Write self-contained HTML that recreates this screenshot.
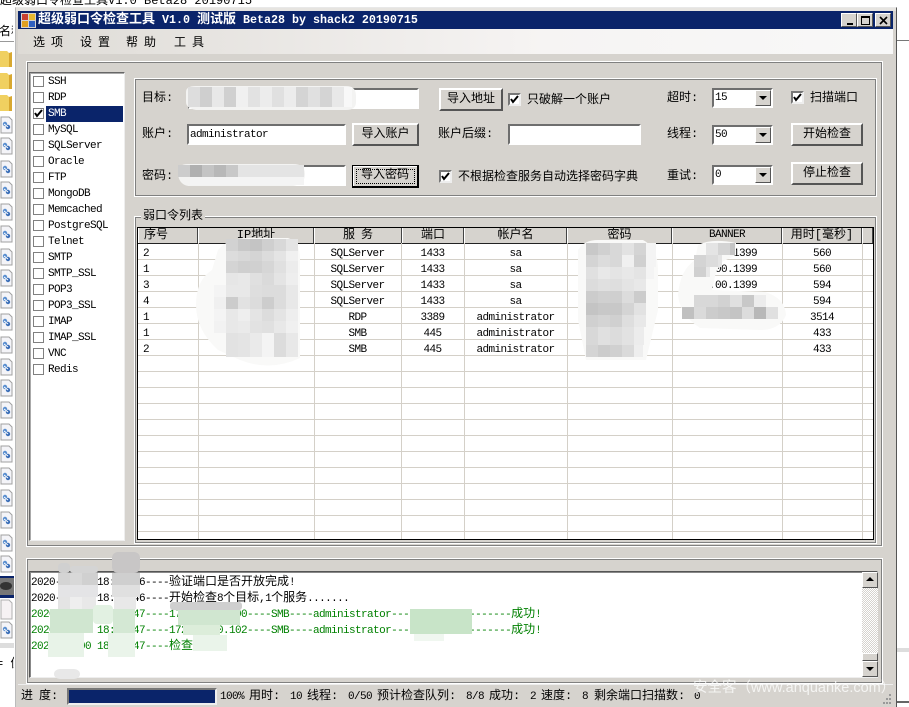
<!DOCTYPE html>
<html><head><meta charset="utf-8"><style>
html,body{margin:0;padding:0;background:#fff}
#p{position:relative;width:909px;height:707px;overflow:hidden;background:#fff;font:12px/16px "Liberation Mono","WenQuanYi Zen Hei","Noto Sans CJK SC",monospace;color:#000}
#p div,#p span{position:absolute;box-sizing:border-box}
#p span.z{position:static;font-size:12px;letter-spacing:0}
.t{white-space:pre;height:16px}
.c{text-align:center}
.m{font-size:11px;letter-spacing:-.6px}
.t.m{margin-top:2px}
.lg{font-size:11px;letter-spacing:-.6px}
.mn{word-spacing:-1.2px}
.g{border:1px solid #fff;outline:1px solid #808080;outline-offset:-2px}
.in{background:#fff;border:2px solid;border-color:#6e6e6e #fff #fff #6e6e6e}
.b{background:#d6d3ce;border:2px solid;border-color:#fff #555 #555 #fff;text-align:center;line-height:18px}
.cb{width:13px;height:13px;background:#fff;border:2px solid;border-color:#777 #eee #eee #777}
.cb svg{position:absolute;left:0;top:0}
.l{width:11px;height:11px;left:33px;border:1px solid #808080;background:#fff}
.arr{width:0;height:0;border-left:4px solid transparent;border-right:4px solid transparent}
.hl{height:1px;left:138px;width:735px;background:#d4d0c8}
.vl{width:1px;top:243px;height:296px;background:#d4d0c8}
.hd{top:228px;height:15px;background:#d6d3ce;border-right:1px solid #444;border-left:1px solid #fff;text-align:center;line-height:15px}
.gr{color:#008000}
</style></head><body><div id="p">
<div class="t" style="left:0;top:-7px;font-size:12px">超级弱口令检查工具V1.0 Beta28 20190715</div>

<svg style="position:absolute;left:0;top:0" width="15" height="707">
<defs>
<g id="f"><path d="M1 1h8l3 3v13H1z" fill="#f4f4f8" stroke="#a0a0a0"/><circle cx="5" cy="8" r="2.2" fill="#5b8fd0"/><circle cx="8" cy="11" r="2.2" fill="#3c6fb8"/><path d="M4 8l4 3" stroke="#fff"/></g>
<g id="o"><path d="M0 2h7l2 2h3v14H0z" fill="#f0d060"/><path d="M9 4l3-1v15H9z" fill="#d8a830"/></g>
</defs>
<rect x="0" y="22" width="14" height="19" fill="#fff"/>
<rect x="0" y="41" width="14" height="1" fill="#999"/>
<use href="#o" y="49"/><use href="#o" y="71"/><use href="#o" y="93"/>
<use href="#f" y="116"/><use href="#f" y="137"/><use href="#f" y="160"/><use href="#f" y="181"/><use href="#f" y="203"/><use href="#f" y="225"/><use href="#f" y="248"/><use href="#f" y="269"/><use href="#f" y="291"/><use href="#f" y="313"/><use href="#f" y="336"/><use href="#f" y="358"/><use href="#f" y="379"/><use href="#f" y="401"/><use href="#f" y="423"/><use href="#f" y="445"/><use href="#f" y="467"/><use href="#f" y="489"/><use href="#f" y="511"/><use href="#f" y="534"/><use href="#f" y="555"/>
<rect x="0" y="576" width="14" height="22" fill="#0a246a"/><rect x="0" y="578" width="14" height="17" fill="#777"/><ellipse cx="6" cy="586" rx="6" ry="4" fill="#333"/>
<path d="M1 600h8l3 3v16H1z" fill="#f6f2f4" stroke="#b0b0b0"/>
<use href="#f" y="621"/>
<rect x="0" y="643" width="14" height="5" fill="#ddd"/>
</svg>
<div class="t" style="left:-1px;top:24px;width:14px;overflow:hidden">名称</div>
<div class="t" style="left:-4px;top:656px;width:18px;overflow:hidden">= 值</div>

<div style="left:897px;top:40px;width:12px;height:1px;background:#777"></div>
<div style="left:897px;top:648px;width:12px;height:4px;background:#ddd"></div>
<div style="left:897px;top:701px;width:12px;height:2px;background:#666"></div>

<!-- window -->
<div style="left:15px;top:7px;width:882px;height:701px;background:#d6d3ce;border-top:1px solid #e8e8e8;border-left:1px solid #bbb;border-right:1px solid #555"></div>
<div style="left:16px;top:8px;width:880px;height:3px;background:#e6e4e0"></div>
<div style="left:18px;top:11px;width:875px;height:18px;background:#0a246a"></div>
<svg style="position:absolute;left:21px;top:13px" width="15" height="15"><rect width="15" height="15" fill="#d6d3ce"/><rect x="1" y="1" width="6" height="6" fill="#c84030"/><rect x="8" y="1" width="6" height="6" fill="#e8b830"/><rect x="1" y="8" width="6" height="6" fill="#e0a020"/><rect x="8" y="8" width="6" height="6" fill="#3060c0"/></svg>
<div class="t" style="left:38px;top:12px;color:#fff;font-size:13px;font-weight:bold;font-family:'Liberation Mono','Noto Sans CJK SC',monospace;letter-spacing:0">超级弱口令检查工具<span style="position:static;font-size:11.67px"> V1.0 </span>测试版<span style="position:static;font-size:11.67px"> Beta28 by shack2 20190715</span></div>
<div class="b" style="left:841px;top:13px;width:16px;height:14px;border-width:1px"><span style="left:5px;top:9px;width:6px;height:2px;background:#000"></span></div>
<div class="b" style="left:857px;top:13px;width:16px;height:14px;border-width:1px"><span style="left:3px;top:2px;width:9px;height:9px;border:1px solid #000;border-top-width:2px"></span></div>
<div class="b" style="left:875px;top:13px;width:16px;height:14px;border-width:1px"><svg style="position:absolute;left:3px;top:2px" width="9" height="9"><path d="M1 1l7 7M8 1l-7 7" stroke="#000" stroke-width="1.6"/></svg></div>

<div style="left:18px;top:29px;width:875px;height:25px;background:linear-gradient(90deg,#dedbd6,#f6f4f3 60%,#f8f8f8)"></div>
<div class="t mn" style="left:33px;top:35px">选 项</div>
<div class="t mn" style="left:80px;top:35px">设 置</div>
<div class="t mn" style="left:126px;top:35px">帮 助</div>
<div class="t mn" style="left:174px;top:35px">工 具</div>

<!-- outer panels -->
<div class="g" style="left:26px;top:61px;width:857px;height:486px"></div>
<div class="g" style="left:26px;top:558px;width:857px;height:126px"></div>

<!-- service list -->
<div style="left:29px;top:72px;width:96px;height:469px;background:#fff;border:1px solid;border-color:#666 #eee #eee #666;box-shadow:inset 1px 1px 0 #aaa"></div>
<div style="left:46px;top:106px;width:77px;height:16px;background:#0a246a"></div>
<div class="l" style="top:76px"></div><div class="t m" style="left:48px;top:72px">SSH</div>
<div class="l" style="top:92px"></div><div class="t m" style="left:48px;top:88px">RDP</div>
<div class="l" style="top:108px"><svg style="position:absolute;left:0;top:0" width="9" height="9"><path d="M1 4l2 3 5-6" fill="none" stroke="#000" stroke-width="2"/></svg></div><div class="t m" style="left:48px;top:104px;color:#fff">SMB</div>
<div class="l" style="top:124px"></div><div class="t m" style="left:48px;top:120px">MySQL</div>
<div class="l" style="top:140px"></div><div class="t m" style="left:48px;top:136px">SQLServer</div>
<div class="l" style="top:156px"></div><div class="t m" style="left:48px;top:152px">Oracle</div>
<div class="l" style="top:172px"></div><div class="t m" style="left:48px;top:168px">FTP</div>
<div class="l" style="top:188px"></div><div class="t m" style="left:48px;top:184px">MongoDB</div>
<div class="l" style="top:204px"></div><div class="t m" style="left:48px;top:200px">Memcached</div>
<div class="l" style="top:220px"></div><div class="t m" style="left:48px;top:216px">PostgreSQL</div>
<div class="l" style="top:236px"></div><div class="t m" style="left:48px;top:232px">Telnet</div>
<div class="l" style="top:252px"></div><div class="t m" style="left:48px;top:248px">SMTP</div>
<div class="l" style="top:268px"></div><div class="t m" style="left:48px;top:264px">SMTP_SSL</div>
<div class="l" style="top:284px"></div><div class="t m" style="left:48px;top:280px">POP3</div>
<div class="l" style="top:300px"></div><div class="t m" style="left:48px;top:296px">POP3_SSL</div>
<div class="l" style="top:316px"></div><div class="t m" style="left:48px;top:312px">IMAP</div>
<div class="l" style="top:332px"></div><div class="t m" style="left:48px;top:328px">IMAP_SSL</div>
<div class="l" style="top:348px"></div><div class="t m" style="left:48px;top:344px">VNC</div>
<div class="l" style="top:364px"></div><div class="t m" style="left:48px;top:360px">Redis</div>

<!-- params -->
<div class="g" style="left:134px;top:78px;width:743px;height:119px"></div>
<div class="t" style="left:142px;top:90px">目标:</div>
<div class="t" style="left:142px;top:126px">账户:</div>
<div class="t" style="left:142px;top:168px">密码:</div>
<div class="in" style="left:188px;top:88px;width:231px;height:21px"></div>
<div class="in" style="left:187px;top:124px;width:159px;height:21px"></div>
<div class="t m" style="left:190px;top:125px">administrator</div>
<div class="in" style="left:187px;top:165px;width:159px;height:21px"></div>
<div class="b" style="left:439px;top:88px;width:64px;height:23px">导入地址</div>
<div class="b" style="left:352px;top:123px;width:67px;height:23px">导入账户</div>
<div class="b" style="left:352px;top:165px;width:67px;height:23px;border:1px solid #000;border-right-width:2px;border-bottom-width:2px;line-height:19px;box-shadow:inset 1px 1px 0 #fff">导入密码<span style="left:3px;top:3px;width:59px;height:15px;border:1px dotted #000"></span></div>
<div class="cb" style="left:508px;top:93px"><svg width="9" height="9"><path d="M1 4l2 3 5-6" fill="none" stroke="#000" stroke-width="2"/></svg></div>
<div class="t" style="left:527px;top:92px">只破解一个账户</div>
<div class="t" style="left:438px;top:126px">账户后缀:</div>
<div class="in" style="left:508px;top:124px;width:133px;height:21px"></div>
<div class="cb" style="left:439px;top:170px"><svg width="9" height="9"><path d="M1 4l2 3 5-6" fill="none" stroke="#000" stroke-width="2"/></svg></div>
<div class="t" style="left:458px;top:169px">不根据检查服务自动选择密码字典</div>
<div class="t" style="left:667px;top:90px">超时:</div>
<div class="t" style="left:667px;top:126px">线程:</div>
<div class="t" style="left:667px;top:168px">重试:</div>
<div class="in" style="left:712px;top:88px;width:61px;height:20px"></div>
<div class="in" style="left:712px;top:125px;width:61px;height:20px"></div>
<div class="in" style="left:712px;top:165px;width:61px;height:20px"></div>
<div class="t m" style="left:715px;top:88px">15</div>
<div class="t m" style="left:715px;top:125px">50</div>
<div class="t m" style="left:715px;top:165px">0</div>
<div class="b" style="left:755px;top:90px;width:16px;height:16px;border-width:1px"><span class="arr" style="left:3px;top:5px;border-top:4px solid #000"></span></div>
<div class="b" style="left:755px;top:127px;width:16px;height:16px;border-width:1px"><span class="arr" style="left:3px;top:5px;border-top:4px solid #000"></span></div>
<div class="b" style="left:755px;top:167px;width:16px;height:16px;border-width:1px"><span class="arr" style="left:3px;top:5px;border-top:4px solid #000"></span></div>
<div class="cb" style="left:791px;top:91px"><svg width="9" height="9"><path d="M1 4l2 3 5-6" fill="none" stroke="#000" stroke-width="2"/></svg></div>
<div class="t" style="left:810px;top:90px">扫描端口</div>
<div class="b" style="left:791px;top:123px;width:72px;height:23px">开始检查</div>
<div class="b" style="left:791px;top:162px;width:72px;height:23px">停止检查</div>

<!-- table group -->
<div class="g" style="left:134px;top:216px;width:743px;height:328px"></div>
<div class="t" style="left:141px;top:208px;background:#d6d3ce;padding:0 2px">弱口令列表</div>
<div style="left:137px;top:227px;width:737px;height:313px;background:#fff;border:1px solid #000"></div>
<div class="hd" style="left:138px;width:60px;padding-right:24px">序号</div>
<div class="hd" style="left:198px;width:116px">IP地址</div>
<div class="hd mn" style="left:314px;width:88px">服 务</div>
<div class="hd" style="left:402px;width:62px">端口</div>
<div class="hd" style="left:464px;width:103px">帐户名</div>
<div class="hd" style="left:567px;width:105px">密码</div>
<div class="hd m" style="left:672px;width:110px">BANNER</div>
<div class="hd" style="left:782px;width:80px">用时[毫秒]</div>
<div class="hd" style="left:862px;width:11px"></div>
<div style="left:138px;top:243px;width:735px;height:1px;background:#222"></div>

<div class="hl" style="top:259px"></div><div class="hl" style="top:275px"></div><div class="hl" style="top:291px"></div><div class="hl" style="top:307px"></div><div class="hl" style="top:323px"></div><div class="hl" style="top:339px"></div><div class="hl" style="top:355px"></div><div class="hl" style="top:371px"></div><div class="hl" style="top:387px"></div><div class="hl" style="top:403px"></div><div class="hl" style="top:419px"></div><div class="hl" style="top:435px"></div><div class="hl" style="top:451px"></div><div class="hl" style="top:467px"></div><div class="hl" style="top:483px"></div><div class="hl" style="top:499px"></div><div class="hl" style="top:515px"></div><div class="hl" style="top:531px"></div>
<div class="vl" style="left:198px"></div><div class="vl" style="left:314px"></div><div class="vl" style="left:401px"></div><div class="vl" style="left:464px"></div><div class="vl" style="left:567px"></div><div class="vl" style="left:672px"></div><div class="vl" style="left:782px"></div><div class="vl" style="left:862px"></div>

<div class="t m" style="left:143px;top:244px">2</div><div class="t m c" style="left:314px;width:87px;top:244px">SQLServer</div><div class="t m c" style="left:401px;width:63px;top:244px">1433</div><div class="t m c" style="left:464px;width:103px;top:244px">sa</div><div class="t m c" style="left:672px;width:110px;top:244px">10.00.1399</div><div class="t m c" style="left:782px;width:80px;top:244px">560</div>
<div class="t m" style="left:143px;top:260px">1</div><div class="t m c" style="left:314px;width:87px;top:260px">SQLServer</div><div class="t m c" style="left:401px;width:63px;top:260px">1433</div><div class="t m c" style="left:464px;width:103px;top:260px">sa</div><div class="t m c" style="left:672px;width:110px;top:260px">10.00.1399</div><div class="t m c" style="left:782px;width:80px;top:260px">560</div>
<div class="t m" style="left:143px;top:276px">3</div><div class="t m c" style="left:314px;width:87px;top:276px">SQLServer</div><div class="t m c" style="left:401px;width:63px;top:276px">1433</div><div class="t m c" style="left:464px;width:103px;top:276px">sa</div><div class="t m c" style="left:672px;width:110px;top:276px">10.00.1399</div><div class="t m c" style="left:782px;width:80px;top:276px">594</div>
<div class="t m" style="left:143px;top:292px">4</div><div class="t m c" style="left:314px;width:87px;top:292px">SQLServer</div><div class="t m c" style="left:401px;width:63px;top:292px">1433</div><div class="t m c" style="left:464px;width:103px;top:292px">sa</div><div class="t m c" style="left:782px;width:80px;top:292px">594</div>
<div class="t m" style="left:143px;top:308px">1</div><div class="t m c" style="left:314px;width:87px;top:308px">RDP</div><div class="t m c" style="left:401px;width:63px;top:308px">3389</div><div class="t m c" style="left:464px;width:103px;top:308px">administrator</div><div class="t m c" style="left:782px;width:80px;top:308px">3514</div>
<div class="t m" style="left:143px;top:324px">1</div><div class="t m c" style="left:314px;width:87px;top:324px">SMB</div><div class="t m c" style="left:401px;width:63px;top:324px">445</div><div class="t m c" style="left:464px;width:103px;top:324px">administrator</div><div class="t m c" style="left:782px;width:80px;top:324px">433</div>
<div class="t m" style="left:143px;top:340px">2</div><div class="t m c" style="left:314px;width:87px;top:340px">SMB</div><div class="t m c" style="left:401px;width:63px;top:340px">445</div><div class="t m c" style="left:464px;width:103px;top:340px">administrator</div><div class="t m c" style="left:782px;width:80px;top:340px">433</div>

<!-- log -->
<div style="left:29px;top:571px;width:849px;height:107px;background:#fff;border:1px solid;border-color:#555 #eee #eee #555;box-shadow:inset 1px 1px 0 #888"></div>
<div class="t lg" style="left:31px;top:574px">2020-00-00 18:00:46----<span class="z">验证端口是否开放完成</span>!</div>
<div class="t lg" style="left:31px;top:590px">2020-00-00 18:00:46----<span class="z">开始检查</span>8<span class="z">个目标</span>,1<span class="z">个服务</span>.......</div>
<div class="t lg gr" style="left:31px;top:606px">2020-00-00 18:00:47----172.16.10.100----SMB----administrator----password1-------<span class="z">成功</span>!</div>
<div class="t lg gr" style="left:31px;top:622px">2020-00-00 18:00:47----172.16.10.102----SMB----administrator----password1-------<span class="z">成功</span>!</div>
<div class="t lg gr" style="left:31px;top:638px">2020-00-00 18:00:47----<span class="z">检查完成</span></div>
<div style="left:862px;top:572px;width:16px;height:105px;background:repeating-conic-gradient(#d6d3ce 0 25%,#fff 0 50%) 0 0/2px 2px"></div>
<div class="b" style="left:862px;top:572px;width:16px;height:16px;border-width:1px"><span class="arr" style="left:3px;top:4px;border-bottom:4px solid #000"></span></div>
<div class="b" style="left:862px;top:653px;width:16px;height:8px;border-width:1px"></div>
<div class="b" style="left:862px;top:661px;width:16px;height:16px;border-width:1px"><span class="arr" style="left:3px;top:5px;border-top:4px solid #000"></span></div>

<!-- status -->
<div style="left:18px;top:684px;width:875px;height:23px;background:#d6d3ce;border-top:1px solid #eee"></div>
<div class="t mn" style="left:21px;top:688px">进 度:</div>
<div style="left:67px;top:688px;width:150px;height:17px;background:#0a246a;border:2px solid;border-color:#777 #eee #eee #777"></div>
<div class="t m" style="left:220px;top:687px">100%</div><div class="t" style="left:249px;top:688px">用时:</div><div class="t m" style="left:290px;top:687px">10</div>
<div class="t" style="left:307px;top:688px">线程:</div><div class="t m" style="left:348px;top:687px">0/50</div>
<div class="t" style="left:377px;top:688px">预计检查队列:</div><div class="t m" style="left:466px;top:687px">8/8</div>
<div class="t" style="left:489px;top:688px">成功:</div><div class="t m" style="left:530px;top:687px">2</div>
<div class="t" style="left:541px;top:688px">速度:</div><div class="t m" style="left:582px;top:687px">8</div>
<div class="t" style="left:594px;top:688px">剩余端口扫描数:</div><div class="t m" style="left:694px;top:687px">0</div>
<div class="t" style="left:693px;top:680px;font:14.5px/16px 'Liberation Sans','Noto Sans CJK SC',sans-serif;color:#fff;opacity:.75">安全客（www.anquanke.com）</div>
<svg style="position:absolute;left:880px;top:692px" width="13" height="14"><g fill="#999"><rect x="9" y="2" width="2" height="2"/><rect x="6" y="6" width="2" height="2"/><rect x="9" y="6" width="2" height="2"/><rect x="3" y="10" width="2" height="2"/><rect x="6" y="10" width="2" height="2"/><rect x="9" y="10" width="2" height="2"/></g></svg>

<!-- mosaics -->
<svg style="position:absolute;left:0;top:0" width="909" height="707">
<!-- halos -->
<g fill="#f9f9f8">
<path d="M186 92q0-6 10-6h150q10 0 10 10v6q0 8-10 8h-150q-10-2-10-8z" fill="#f3f3f2"/>
<path d="M178 172q0-8 10-8h105q12 0 12 10t-12 12h-105q-10-2-10-14z" fill="#f3f3f2"/>
<path d="M218 250q10-12 30-12h40q12 4 12 20v100q-30 14-60 2l-22-10q-22-20-22-45t16-35z"/>
<path d="M578 250q6-10 20-10h45q15 8 15 30v40l-12 50h-60l-8-40z"/>
<path d="M698 245Q712 238 736 243L736 255 722 262 716 272 712 290 765 292Q785 298 786 315 780 330 760 330L700 328Q680 315 678 295 680 270 695 260Z"/>
</g>
<!-- target -->
<g fill="#d8d8d8"><rect x="188" y="87" width="12" height="20" fill="#ddd"/><rect x="200" y="87" width="12" height="20" fill="#cfcfcf"/><rect x="212" y="87" width="12" height="20" fill="#e8e8e8"/><rect x="224" y="87" width="12" height="20" fill="#d0d0d0"/><rect x="236" y="87" width="12" height="20" fill="#f0f0f0"/><rect x="248" y="87" width="12" height="20" fill="#e2e2e2"/><rect x="260" y="87" width="12" height="20" fill="#ececec"/><rect x="272" y="87" width="12" height="20" fill="#e0e0e0"/><rect x="284" y="87" width="12" height="20" fill="#ececec"/><rect x="296" y="87" width="12" height="20" fill="#d4d4d4"/><rect x="308" y="87" width="12" height="20" fill="#e0e0e0"/><rect x="320" y="87" width="12" height="20" fill="#d4d4d4"/><rect x="332" y="87" width="12" height="20" fill="#e8e8e8"/><rect x="344" y="87" width="8" height="20" fill="#f8f8f8"/></g>
<!-- password -->
<rect x="178" y="165" width="12" height="12" fill="#ccc"/><rect x="190" y="165" width="12" height="12" fill="#b0b0b0"/><rect x="202" y="165" width="12" height="12" fill="#c4c4c4"/><rect x="214" y="165" width="12" height="12" fill="#b8b8b8"/><rect x="226" y="165" width="12" height="12" fill="#c8c8c8"/><rect x="238" y="165" width="66" height="12" fill="#e4e4e4"/>
<rect x="190" y="177" width="114" height="8" fill="#f4f4f4"/>
<!-- IP -->
<g>
<rect x="226" y="239" width="12" height="12" fill="#d2d2d2"/><rect x="238" y="239" width="12" height="12" fill="#c8c8c8"/><rect x="250" y="239" width="12" height="12" fill="#c4c4c4"/><rect x="262" y="239" width="12" height="12" fill="#cfcfcf"/><rect x="274" y="239" width="12" height="12" fill="#d8d8d8"/><rect x="286" y="239" width="12" height="12" fill="#e4e4e4"/>
<rect x="226" y="251" width="12" height="10" fill="#dcdcdc"/><rect x="238" y="251" width="12" height="10" fill="#d8d8d8"/><rect x="250" y="251" width="12" height="10" fill="#d4d4d4"/><rect x="262" y="251" width="12" height="10" fill="#dcdcdc"/><rect x="274" y="251" width="12" height="10" fill="#e4e4e4"/><rect x="286" y="251" width="12" height="10" fill="#f0f0f0"/>
<rect x="226" y="261" width="12" height="12" fill="#d4d4d4"/><rect x="238" y="261" width="12" height="12" fill="#cfcfcf"/><rect x="250" y="261" width="12" height="12" fill="#d0d0d0"/><rect x="262" y="261" width="12" height="12" fill="#d6d6d6"/><rect x="274" y="261" width="12" height="12" fill="#e0e0e0"/><rect x="286" y="261" width="12" height="12" fill="#ececec"/>
<rect x="226" y="273" width="12" height="12" fill="#e6e6e6"/><rect x="238" y="273" width="12" height="12" fill="#e8e8e8"/><rect x="250" y="273" width="12" height="12" fill="#e0e0e0"/><rect x="262" y="273" width="12" height="12" fill="#dadada"/><rect x="274" y="273" width="12" height="12" fill="#e4e4e4"/><rect x="286" y="273" width="12" height="12" fill="#eeeeee"/>
<rect x="214" y="285" width="12" height="12" fill="#f4f4f4"/><rect x="226" y="285" width="12" height="12" fill="#e8e8e8"/><rect x="238" y="285" width="12" height="12" fill="#e8e8e8"/><rect x="250" y="285" width="12" height="12" fill="#dedede"/><rect x="262" y="285" width="12" height="12" fill="#dcdcdc"/><rect x="274" y="285" width="12" height="12" fill="#dcdcdc"/><rect x="286" y="285" width="12" height="12" fill="#e8e8e8"/>
<rect x="214" y="297" width="12" height="12" fill="#f0f0f0"/><rect x="226" y="297" width="12" height="12" fill="#cccccc"/><rect x="238" y="297" width="12" height="12" fill="#e2e2e2"/><rect x="250" y="297" width="12" height="12" fill="#dcdcdc"/><rect x="262" y="297" width="12" height="12" fill="#cdcdcd"/><rect x="274" y="297" width="12" height="12" fill="#dcdcdc"/><rect x="286" y="297" width="12" height="12" fill="#e8e8e8"/>
<rect x="214" y="309" width="12" height="12" fill="#f4f4f4"/><rect x="226" y="309" width="12" height="12" fill="#e8e8e8"/><rect x="238" y="309" width="12" height="12" fill="#eeeeee"/><rect x="250" y="309" width="12" height="12" fill="#e4e4e4"/><rect x="262" y="309" width="12" height="12" fill="#dcdcdc"/><rect x="274" y="309" width="12" height="12" fill="#e4e4e4"/><rect x="286" y="309" width="12" height="12" fill="#eeeeee"/>
<rect x="214" y="321" width="12" height="12" fill="#f2f2f2"/><rect x="226" y="321" width="12" height="12" fill="#e8e8e8"/><rect x="238" y="321" width="12" height="12" fill="#eaeaea"/><rect x="250" y="321" width="12" height="12" fill="#e2e2e2"/><rect x="262" y="321" width="12" height="12" fill="#e0e0e0"/><rect x="274" y="321" width="12" height="12" fill="#e8e8e8"/><rect x="286" y="321" width="12" height="12" fill="#f0f0f0"/>
<rect x="226" y="333" width="12" height="24" fill="#e2e2e2"/><rect x="238" y="333" width="12" height="24" fill="#e4e4e4"/><rect x="250" y="333" width="12" height="24" fill="#eaeaea"/><rect x="262" y="333" width="12" height="24" fill="#f4f4f4"/><rect x="274" y="333" width="12" height="24" fill="#dcdcdc"/><rect x="286" y="333" width="12" height="24" fill="#e8e8e8"/>
</g>
<!-- password column -->
<g>
<rect x="586" y="243" width="12" height="12" fill="#c8c8c8"/><rect x="598" y="243" width="12" height="12" fill="#d0d0d0"/><rect x="610" y="243" width="12" height="12" fill="#d8d8d8"/><rect x="622" y="243" width="12" height="12" fill="#e2e2e2"/><rect x="634" y="243" width="12" height="12" fill="#d4d4d4"/><rect x="646" y="243" width="10" height="12" fill="#f4f4f4"/>
<rect x="586" y="255" width="12" height="12" fill="#d4d4d4"/><rect x="598" y="255" width="12" height="12" fill="#dcdcdc"/><rect x="610" y="255" width="12" height="12" fill="#d8d8d8"/><rect x="622" y="255" width="12" height="12" fill="#f0f0f0"/><rect x="634" y="255" width="12" height="12" fill="#d0d0d0"/><rect x="646" y="255" width="10" height="12" fill="#f4f4f4"/>
<rect x="586" y="267" width="12" height="12" fill="#e0e0e0"/><rect x="598" y="267" width="12" height="12" fill="#e8e8e8"/><rect x="610" y="267" width="12" height="12" fill="#e4e4e4"/><rect x="622" y="267" width="12" height="12" fill="#e8e8e8"/><rect x="634" y="267" width="12" height="12" fill="#e4e4e4"/><rect x="646" y="267" width="8" height="12" fill="#f4f4f4"/>
<rect x="586" y="279" width="12" height="12" fill="#dcdcdc"/><rect x="598" y="279" width="12" height="12" fill="#e0e0e0"/><rect x="610" y="279" width="12" height="12" fill="#dedede"/><rect x="622" y="279" width="12" height="12" fill="#e4e4e4"/><rect x="634" y="279" width="12" height="12" fill="#e8e8e8"/>
<rect x="586" y="291" width="12" height="12" fill="#cccccc"/><rect x="598" y="291" width="12" height="12" fill="#d0d0d0"/><rect x="610" y="291" width="12" height="12" fill="#cfcfcf"/><rect x="622" y="291" width="12" height="12" fill="#dcdcdc"/><rect x="634" y="291" width="12" height="12" fill="#cccccc"/>
<rect x="586" y="303" width="12" height="12" fill="#c4c4c4"/><rect x="598" y="303" width="12" height="12" fill="#c8c8c8"/><rect x="610" y="303" width="12" height="12" fill="#c8c8c8"/><rect x="622" y="303" width="12" height="12" fill="#d4d4d4"/><rect x="634" y="303" width="12" height="12" fill="#e2e2e2"/>
<rect x="586" y="315" width="12" height="12" fill="#d0d0d0"/><rect x="598" y="315" width="12" height="12" fill="#d4d4d4"/><rect x="610" y="315" width="12" height="12" fill="#d0d0d0"/><rect x="622" y="315" width="12" height="12" fill="#dedede"/><rect x="634" y="315" width="12" height="12" fill="#e8e8e8"/>
<rect x="586" y="327" width="12" height="18" fill="#d8d8d8"/><rect x="598" y="327" width="12" height="18" fill="#e0e0e0"/><rect x="610" y="327" width="12" height="18" fill="#dcdcdc"/><rect x="622" y="327" width="12" height="18" fill="#e2e2e2"/><rect x="634" y="327" width="10" height="18" fill="#ececec"/>
<rect x="586" y="345" width="12" height="12" fill="#d4d4d4"/><rect x="598" y="345" width="12" height="12" fill="#cccccc"/><rect x="610" y="345" width="12" height="12" fill="#d0d0d0"/><rect x="622" y="345" width="12" height="12" fill="#dadada"/><rect x="634" y="345" width="9" height="12" fill="#eeeeee"/>
</g>
<!-- banner -->
<g>
<rect x="706" y="243" width="12" height="12" fill="#e4e4e4"/><rect x="718" y="243" width="12" height="12" fill="#d4d4d4"/><rect x="730" y="243" width="5" height="12" fill="#c4c4c4"/>
<rect x="694" y="255" width="12" height="12" fill="#d4d4d4"/><rect x="706" y="255" width="12" height="12" fill="#dcdcdc"/><rect x="718" y="255" width="4" height="12" fill="#e4e4e4"/>
<rect x="694" y="267" width="12" height="10" fill="#d0d0d0"/><rect x="706" y="267" width="4" height="10" fill="#e8e8e8"/>
<rect x="694" y="295" width="12" height="12" fill="#d8d8d8"/><rect x="706" y="295" width="12" height="12" fill="#d8d8d8"/><rect x="718" y="295" width="12" height="12" fill="#d2d2d2"/><rect x="730" y="295" width="12" height="12" fill="#e0e0e0"/><rect x="742" y="295" width="12" height="12" fill="#c8c8c8"/><rect x="754" y="295" width="12" height="12" fill="#ececec"/>
<rect x="682" y="307" width="12" height="12" fill="#c0c0c0"/><rect x="694" y="307" width="12" height="12" fill="#dadada"/><rect x="706" y="307" width="12" height="12" fill="#cccccc"/><rect x="718" y="307" width="12" height="12" fill="#c8c8c8"/><rect x="730" y="307" width="12" height="12" fill="#c4c4c4"/><rect x="742" y="307" width="12" height="12" fill="#dcdcdc"/><rect x="754" y="307" width="12" height="12" fill="#b8b8b8"/><rect x="766" y="307" width="12" height="12" fill="#e0e0e0"/>
</g>
<!-- log left -->
<g>
<rect x="58" y="563" width="12" height="10" rx="4" fill="#d0d0d0"/><rect x="70" y="566" width="28" height="7" rx="3" fill="#d4d4d4"/><rect x="112" y="552" width="28" height="21" rx="6" fill="#c8c6c6"/>
<rect x="58" y="573" width="12" height="12" fill="#d4d4d4"/><rect x="70" y="573" width="12" height="12" fill="#d8d8d8"/><rect x="82" y="573" width="16" height="12" fill="#d0d0d0"/><rect x="112" y="573" width="28" height="12" fill="#cfcfcf"/>
<rect x="58" y="585" width="40" height="12" fill="#e4e4e6"/><rect x="112" y="585" width="28" height="12" fill="#e0e0e0"/>
<rect x="58" y="597" width="12" height="12" fill="#e4e4e4"/><rect x="70" y="597" width="12" height="12" fill="#eeeeee"/><rect x="82" y="597" width="14" height="12" fill="#e8e8e8"/><rect x="114" y="597" width="22" height="12" fill="#e8e8e8"/>
<rect x="50" y="609" width="43" height="24" fill="#d0e6d0"/><rect x="93" y="605" width="20" height="19" rx="4" fill="#e2f1e2"/><rect x="113" y="609" width="22" height="24" fill="#d4e8d4"/>
<rect x="48" y="633" width="36" height="24" fill="#e8f3e8"/><rect x="108" y="633" width="27" height="24" fill="#eaf4ea"/>
<rect x="54" y="669" width="26" height="10" rx="6" fill="#e8e8e8"/>
<rect x="170" y="602" width="72" height="8" rx="3" fill="#cfcfcf"/><rect x="178" y="610" width="62" height="15" fill="#d0e6d0"/><rect x="183" y="625" width="37" height="10" fill="#dcedda"/><rect x="193" y="635" width="34" height="16" fill="#eaf4ea"/>
<rect x="410" y="609" width="62" height="25" fill="#c8e4c8"/><rect x="414" y="634" width="30" height="7" fill="#f0f7f0"/>
</g>
</svg>
</div></body></html>
